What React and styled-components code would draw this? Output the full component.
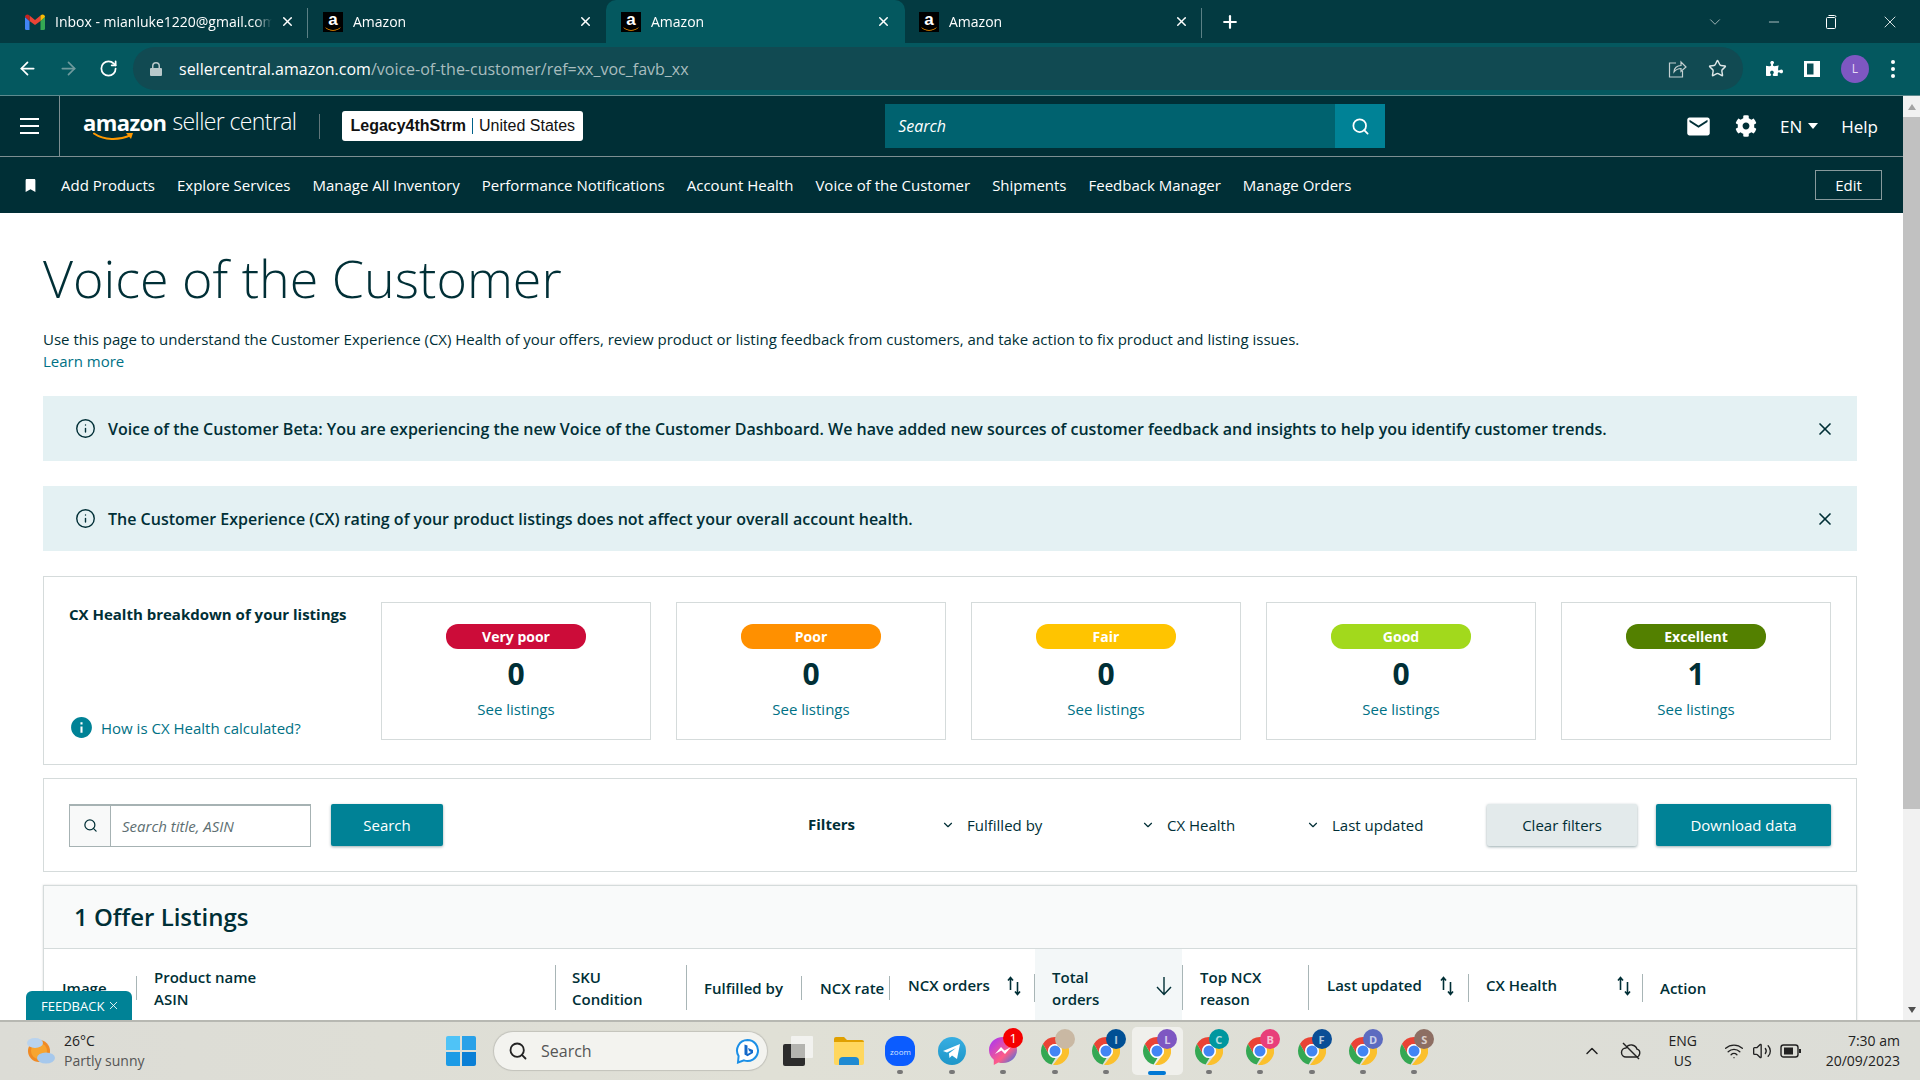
import styled, { createGlobalStyle } from "styled-components"
import { ArrowLeft, ArrowRight, RotateCw, Star, Search as SearchIcon, X, Plus, ChevronDown, Minus, Info, ChevronUp, Wifi, Volume2 } from "lucide-react"
import { FaPuzzlePiece, FaCog, FaBookmark } from "react-icons/fa"
import { MdEmail, MdInfo } from "react-icons/md"

const Global = createGlobalStyle`
    html, body { margin: 0; padding: 0; height: 100%; overflow: hidden; }
    * { box-sizing: border-box; }
    body { font-family: "Open Sans", "Noto Sans", sans-serif; color: #002f36; }
`

const UI = `"Open Sans", "Noto Sans", sans-serif`

function GmailIcon () {
return(<svg width="20" height="16" viewBox="0 0 20 16">
    <path d="M0 3v11.5A1.5 1.5 0 0 0 1.5 16H4.5V7z" fill="#4285f4"/>
    <path d="M20 3v11.5a1.5 1.5 0 0 1-1.5 1.5H15.5V7z" fill="#34a853"/>
    <path d="M4.5 7V1.5L10 6l5.5-4.500V7L10 11z" fill="#ea4335"/>
    <path d="M0 3C0 .8 2.400-.6 4.500 1.500V7L0 3z" fill="#c5221f"/>
    <path d="M20 3c0-2.200-2.400-3.600-4.500-1.500V7L20 3z" fill="#fbbc04"/>
</svg>)
}

function AmazonFavicon () {
return(<Favicon>
    <span>a</span>
    <svg width="20" height="6" viewBox="0 0 20 6"><path d="M2 1c5 4 11 4 16 0-3 5-13 5-16 0z" fill="#f90"/></svg>
</Favicon>)
}

function ChromeTab ({ title, active, gmail }) {
return(<Tab $active={active}>
    {gmail ? <GmailIcon/> : <AmazonFavicon/>}
    <TabTitle>{title}</TabTitle>
    <X size={15} strokeWidth={2.4} color="#fff"/>
</Tab>)
}

function SortArrows () {
return(<svg width="16" height="20" viewBox="0 0 16 20" fill="none" stroke="#002f36" strokeWidth="1.6">
    <path d="M4.500 14V2M2 4.500 4.500 1.500 7 4.500"/>
    <path d="M11.500 6v12M9 15.500l2.500 3 2.500-3"/>
</svg>)
}

function Smile () {
return(<svg width="42" height="10" viewBox="0 0 42 10" fill="none">
    <path d="M1 1.500c10 7 25 7 37 1.500" stroke="#f90" strokeWidth="2" strokeLinecap="round"/>
    <path d="M33 1h7l-2 6z" fill="#f90"/>
</svg>)
}

const chromes = [
    { badge: "", color: "#c9b8a3" },
    { badge: "I", color: "#004f94" },
    { badge: "L", color: "#7e57c2", active: true },
    { badge: "C", color: "#00979f" },
    { badge: "B", color: "#e83e7a" },
    { badge: "F", color: "#0a4e96" },
    { badge: "D", color: "#5c6bc0" },
    { badge: "S", color: "#8d6e63" },
]

function ChromeApp ({ badge, color, active }) {
return(<AppSlot $active={active}>
    <IconWrap>
        <svg width="28" height="28" viewBox="0 0 28 28">
            <path d="M14 0a14 14 0 0 1 12.100 7H14a7 7 0 0 0-6 10.500L1.900 7A14 14 0 0 1 14 0z" fill="#ea4335"/>
            <path d="M1.900 7 8 17.500a7 7 0 0 0 6.500 3.500L10.600 27.600A14 14 0 0 1 1.900 7z" fill="#34a853"/>
            <path d="M14 7h12.100A14 14 0 0 1 12 27.900l8-10.400A7 7 0 0 0 14 7z" fill="#fbc02d"/>
            <circle cx="14" cy="14" r="7" fill="#fff"/>
            <circle cx="14" cy="14" r="5.500" fill="#4285f4"/>
        </svg>
        <Badge $color={color}>{badge}</Badge>
    </IconWrap>
    <AppDot $active={active}/>
</AppSlot>)
}

const navLinks = ["Add Products", "Explore Services", "Manage All Inventory", "Performance Notifications", "Account Health", "Voice of the Customer", "Shipments", "Feedback Manager", "Manage Orders"]

const health = [
    { label: "Very poor", color: "#cc0c39", count: 0 },
    { label: "Poor", color: "#ff9000", count: 0 },
    { label: "Fair", color: "#ffc400", count: 0 },
    { label: "Good", color: "#a2d91c", count: 0 },
    { label: "Excellent", color: "#538000", count: 1 },
]

function App () {
return(<Screen>
    <Global/>
    <TabStrip>
        <ChromeTab gmail title="Inbox - mianluke1220@gmail.com"/>
        <TabSep/>
        <ChromeTab title="Amazon"/>
        <ChromeTab active title="Amazon"/>
        <ChromeTab title="Amazon"/>
        <TabSep/>
        <NewTab><Plus size={20} strokeWidth={2.6} color="#fff"/></NewTab>
        <WindowControls>
            <ChevronDown size={18} strokeWidth={1} color="#cfd8d8"/>
            <Minus size={16} strokeWidth={1} color="#fff"/>
            <svg width="14" height="16" viewBox="0 0 14 16" fill="none" stroke="#fff"><rect x="2.500" y="3.500" width="9" height="11" rx="1"/><path d="M4.500 1.500h6a1.500 1.500 0 0 1 1.500 1.500"/></svg>
            <X size={20} strokeWidth={1} color="#fff"/>
        </WindowControls>
    </TabStrip>
    <Toolbar>
        <ArrowLeft size={21} color="#fff" strokeWidth={2}/>
        <ArrowRight size={21} color="#6f9a9d" strokeWidth={2}/>
        <RotateCw size={19} color="#fff" strokeWidth={2.200}/>
        <Omnibox>
            <svg width="12" height="14" viewBox="0 0 12 14"><path d="M2 6V4a4 4 0 0 1 8 0v2h1a1 1 0 0 1 1 1v6a1 1 0 0 1-1 1H1a1 1 0 0 1-1-1V7a1 1 0 0 1 1-1zm1.500 0h5V4a2.500 2.500 0 0 0-5 0z" fill="#b9c8ca"/></svg>
            <UrlText><b>sellercentral.amazon.com</b>/voice-of-the-customer/ref=xx_voc_favb_xx</UrlText>
            <OmniIcons>
                <svg width="20" height="20" viewBox="0 0 20 20" fill="none" stroke="#c4d0d1" strokeWidth="1.200"><path d="M9 4H2.500v14h13v-6"/><path d="M7 13c0-4 3-6.500 7-6.500V3l5 5-5 4.500V9.500c-3 0-5 1-7 3.500z"/></svg>
                <Star size={19} color="#dfe7e8" strokeWidth={1.800}/>
            </OmniIcons>
        </Omnibox>
        <ToolIcons>
            <FaPuzzlePiece size={17} color="#fff"/>
            <svg width="18" height="18" viewBox="0 0 18 18"><path d="M1 1h16v16H1z" fill="#fff"/><path d="M4 3.500h6.500v11H4z" fill="#0a4f56"/></svg>
            <Avatar>L</Avatar>
            <Dots><i/><i/><i/></Dots>
        </ToolIcons>
    </Toolbar>
    <Main>
        <Page>
            <SellerHeader>
                <Burger><span/><span/><span/></Burger>
                <Logo>
                    <LogoWord>amazon<Smile/></LogoWord>
                    <LogoRest>seller central</LogoRest>
                </Logo>
                <HeaderSep/>
                <AccountBox><b>Legacy4thStrm</b><i/>United States</AccountBox>
                <SearchBar>
                    <SearchLabel>Search</SearchLabel>
                    <SearchGo><SearchIcon size={19} color="#fff" strokeWidth={2.200}/></SearchGo>
                </SearchBar>
                <HeaderRight>
                    <MdEmail size={27} color="#fff"/>
                    <FaCog size={22} color="#fff"/>
                    <Lang>EN<em/></Lang>
                    <span>Help</span>
                </HeaderRight>
            </SellerHeader>
            <NavBar>
                <BookmarkSlot><FaBookmark size={13} color="#fff"/></BookmarkSlot>
                {navLinks.map(l => <NavLink key={l}>{l}</NavLink>)}
                <EditButton>Edit</EditButton>
            </NavBar>
            <Content>
                <Title>Voice of the Customer</Title>
                <Intro>Use this page to understand the Customer Experience (CX) Health of your offers, review product or listing feedback from customers, and take action to fix product and listing issues.<br/><a>Learn more</a></Intro>
                <Alert>
                    <Info size={21} strokeWidth={1.600}/>
                    <p>Voice of the Customer Beta: You are experiencing the new Voice of the Customer Dashboard. We have added new sources of customer feedback and insights to help you identify customer trends.</p>
                    <X size={20} strokeWidth={2}/>
                </Alert>
                <Alert>
                    <Info size={21} strokeWidth={1.600}/>
                    <p>The Customer Experience (CX) rating of your product listings does not affect your overall account health.</p>
                    <X size={20} strokeWidth={2}/>
                </Alert>
                <HealthCard>
                    <HealthLeft>
                        <strong>CX Health breakdown of your listings</strong>
                        <HowLink><MdInfo size={25} color="#008296"/>How is CX Health calculated?</HowLink>
                    </HealthLeft>
                    {health.map(h => (
                        <HealthBox key={h.label}>
                            <Pill $color={h.color}>{h.label}</Pill>
                            <Count>{h.count}</Count>
                            <SeeLink>See listings</SeeLink>
                        </HealthBox>
                    ))}
                </HealthCard>
                <FilterCard>
                    <SearchField>
                        <SearchAddon><SearchIcon size={15} strokeWidth={2}/></SearchAddon>
                        <SearchInput>Search title, ASIN</SearchInput>
                    </SearchField>
                    <PrimaryButton $w={112}>Search</PrimaryButton>
                    <FiltersLabel>Filters</FiltersLabel>
                    <FilterSelect $w={200}><ChevronDown size={14}/>Fulfilled by</FilterSelect>
                    <FilterSelect $w={165}><ChevronDown size={14}/>CX Health</FilterSelect>
                    <FilterSelect $w={166}><ChevronDown size={14}/>Last updated</FilterSelect>
                    <ClearButton>Clear filters</ClearButton>
                    <PrimaryButton $w={175} $tall>Download data</PrimaryButton>
                </FilterCard>
                <ListingsCard>
                    <ListingsTitle>1 Offer Listings</ListingsTitle>
                    <HeadRow>
                        <HeadCell $w={92} $pad={18}>Image</HeadCell>
                        <HeadSep $h={24}/>
                        <HeadCell $w={418} $pad={17}>Product name<br/>ASIN</HeadCell>
                        <HeadSep $h={45}/>
                        <HeadCell $w={130} $pad={16}>SKU<br/>Condition</HeadCell>
                        <HeadSep $h={45}/>
                        <HeadCell $w={114} $pad={17}>Fulfilled by</HeadCell>
                        <HeadSep $h={24}/>
                        <HeadCell $w={87} $pad={18}>NCX rate</HeadCell>
                        <HeadSep $h={24}/>
                        <HeadCell $w={144} $pad={18} $up>NCX orders<SortSlot $right={12}><SortArrows/></SortSlot></HeadCell>
                        <HeadSep $h={28}/>
                        <HeadCell $w={147} $pad={17} $sorted>Total<br/>orders<SortSlot $right={9}><ArrowDownIcon/></SortSlot></HeadCell>
                        <HeadSep $h={45}/>
                        <HeadCell $w={125} $pad={17}>Top NCX<br/>reason</HeadCell>
                        <HeadSep $h={45}/>
                        <HeadCell $w={159} $pad={18} $up>Last updated<SortSlot $right={13}><SortArrows/></SortSlot></HeadCell>
                        <HeadSep $h={28}/>
                        <HeadCell $w={173} $pad={17} $up>CX Health<SortSlot $right={10}><SortArrows/></SortSlot></HeadCell>
                        <HeadSep $h={28}/>
                        <HeadCell $w={150} $pad={17}>Action</HeadCell>
                    </HeadRow>
                </ListingsCard>
            </Content>
            <Feedback>FEEDBACK<X size={13} strokeWidth={1.600}/></Feedback>
        </Page>
        <Scrollbar>
            <ScrollArrow><ArrowGlyph/></ScrollArrow>
            <ScrollThumb/>
            <ScrollArrow $down><ArrowGlyph $down/></ScrollArrow>
        </Scrollbar>
    </Main>
    <Taskbar>
        <Weather>
            <svg width="32" height="32" viewBox="0 0 32 32">
                <circle cx="14" cy="16" r="11" fill="#f08a24"/>
                <circle cx="14" cy="16" r="8" fill="#f7a531"/>
                <ellipse cx="10" cy="8" rx="8" ry="5" fill="#b9d3ee"/>
                <ellipse cx="21" cy="23" rx="9" ry="5.500" fill="#a6c8ec"/>
            </svg>
            <WeatherText><span>26°C</span><small>Partly sunny</small></WeatherText>
        </Weather>
        <StartIcon>
            <svg width="30" height="30" viewBox="0 0 30 30">
                <path d="M0 2a2 2 0 0 1 2-2h12v14H0z" fill="#4fc3f7"/>
                <path d="M16 0h12a2 2 0 0 1 2 2v12H16z" fill="#2aa1e8"/>
                <path d="M0 16h14v14H2a2 2 0 0 1-2-2z" fill="#1c9be6"/>
                <path d="M16 16h14v12a2 2 0 0 1-2 2H16z" fill="#0a7fd6"/>
            </svg>
        </StartIcon>
        <TaskSearch>
            <SearchIcon size={20} color="#222" strokeWidth={2.200}/>
            <span>Search</span>
            <BingMark>
                <svg width="25" height="26" viewBox="0 0 25 26" fill="none">
                    <path d="M12.500 2a10.500 10.500 0 1 1-3.500 20.400L3 24.500l.6-6.500A10.500 10.500 0 0 1 12.500 2z" fill="#fff" stroke="#1b8fe6" strokeWidth="2"/>
                    <path d="M9.500 6.500l3 1v8.500l3.500-2-2-1-1-3 5 2v3l-5.500 3.200-3-1.800z" fill="#1368c9"/>
                </svg>
            </BingMark>
        </TaskSearch>
        <AppSlot>
            <svg width="30" height="30" viewBox="0 0 30 30">
                <rect x="0" y="8" width="22" height="22" rx="2" fill="#2c2c2c"/>
                <rect x="8" y="0" width="22" height="22" rx="1" fill="#f2f2ef"/>
                <rect x="8" y="8" width="14" height="14" fill="#b4b4b0"/>
            </svg>
        </AppSlot>
        <AppSlot>
            <svg width="30" height="28" viewBox="0 0 30 28">
                <path d="M0 2a2 2 0 0 1 2-2h8l3 3h15a2 2 0 0 1 2 2v3H0z" fill="#e0a000"/>
                <path d="M0 5h30v21a2 2 0 0 1-2 2H2a2 2 0 0 1-2-2z" fill="#ffd75e"/>
                <path d="M5 24a4 4 0 0 1 4-4h12a4 4 0 0 1 4 4v4H5z" fill="#1f8ad2"/>
            </svg>
        </AppSlot>
        <AppSlot>
            <ZoomIcon>zoom</ZoomIcon>
            <AppDot/>
        </AppSlot>
        <AppSlot>
            <svg width="28" height="28" viewBox="0 0 28 28">
                <defs><linearGradient id="tg" x1="0" y1="0" x2="0" y2="1"><stop offset="0" stopColor="#37aee2"/><stop offset="1" stopColor="#1e96c8"/></linearGradient></defs>
                <circle cx="14" cy="14" r="14" fill="url(#tg)"/>
                <path d="M5 14 22 7l-3 15-5-3.500-2.500 2.500-.6-4.500L18 11 9 15.500z" fill="#fff"/>
            </svg>
            <AppDot/>
        </AppSlot>
        <AppSlot>
            <IconWrap>
                <svg width="28" height="30" viewBox="0 0 28 30">
                    <defs><linearGradient id="ms" x1="0" y1="0" x2="1" y2="1"><stop offset="0" stopColor="#a033ff"/><stop offset="0.6" stopColor="#ff5c87"/><stop offset="1" stopColor="#0a7cff"/></linearGradient></defs>
                    <path d="M14 1C6 1 0 6.800 0 14c0 4 1.800 7.400 4.800 9.800V29l4.600-2.500c1.500.4 3 .6 4.600.6 8 0 14-5.900 14-13.100S22 1 14 1z" fill="url(#ms)"/>
                    <path d="M6 18l6-7 3.500 3.500L22 11l-6 7-3.500-3.500z" fill="#fff"/>
                </svg>
                <RedBadge>1</RedBadge>
            </IconWrap>
            <AppDot/>
        </AppSlot>
        {chromes.map(c => <ChromeApp key={c.badge + c.color} {...c}/>)}
        <Tray>
            <ChevronUp size={20} strokeWidth={1.800} color="#222"/>
            <svg width="22" height="22" viewBox="0 0 22 22" fill="none" stroke="#222" strokeWidth="1.400"><path d="M6 17h10a4 4 0 0 0 1-7.800A6 6 0 0 0 6 8a4.500 4.500 0 0 0 0 9z"/><path d="M3 3l16 16"/></svg>
            <TrayLang>ENG<br/>US</TrayLang>
            <TrayIcons>
                <Wifi size={20} strokeWidth={1.600} color="#222"/>
                <Volume2 size={20} strokeWidth={1.600} color="#222"/>
                <svg width="22" height="16" viewBox="0 0 22 16" fill="none"><rect x="1" y="2" width="17" height="12" rx="2.500" stroke="#222" strokeWidth="1.400"/><rect x="4" y="4.500" width="9" height="7" fill="#222"/><rect x="19" y="6" width="2" height="4" fill="#222"/></svg>
            </TrayIcons>
            <Clock>7:30 am<br/>20/09/2023</Clock>
        </Tray>
    </Taskbar>
</Screen>)
}

function ArrowDownIcon () {
return(<svg width="18" height="20" viewBox="0 0 18 20" fill="none" stroke="#002f36" strokeWidth="1.400"><path d="M9 1v17M2 11l7 7.500 7-7.500"/></svg>)
}

const Screen = styled.div`
    position: relative;
    display: flex;
    flex-direction: column;
    width: 1920px;
    height: 1080px;
    overflow: hidden;
    background: #fff;
`
const TabStrip = styled.div`
    display: flex;
    align-items: stretch;
    height: 43px;
    padding-left: 10px;
    background: #033a41;
    color: #fff;
    flex: none;
`
const Tab = styled.div`
    display: flex;
    align-items: center;
    width: 299px;
    height: 43px;
    padding: 0 14px 0 15px;
    margin-right: -1px;
    border-radius: 10px 10px 0 0;
    background: ${p => p.$active ? "#04585f" : "transparent"};
    font-size: 14px;
    flex: none;
    svg { flex: none; }
`
const TabTitle = styled.span`
    flex: 1;
    margin: 0 8px 0 10px;
    overflow: hidden;
    white-space: nowrap;
    font-family: "Open Sans", sans-serif;
    font-size: 14px;
    mask-image: linear-gradient(to right, #000 92%, transparent);
`
const Favicon = styled.div`
    position: relative;
    display: flex;
    flex-direction: column;
    align-items: center;
    width: 20px;
    height: 20px;
    background: #000;
    flex: none;
    span {
        color: #fff;
        font: bold 17px/16px "Liberation Sans", sans-serif;
    }
    svg { margin-top: -2px; }
`
const TabSep = styled.div`
    width: 1px;
    height: 30px;
    margin: 8px 0 0 -1px;
    background: #5b8085;
    flex: none;
`
const NewTab = styled.div`
    display: flex;
    align-items: center;
    margin-left: 18px;
`
const WindowControls = styled.div`
    display: flex;
    align-items: center;
    gap: 42px;
    margin-left: auto;
    padding-right: 20px;
`
const Toolbar = styled.div`
    display: flex;
    align-items: center;
    gap: 20px;
    height: 53px;
    padding: 0 0 1px 17px;
    background: #04585f;
    border-bottom: 1px solid #5d8a8e;
    flex: none;
`
const Omnibox = styled.div`
    display: flex;
    align-items: center;
    width: 1610px;
    height: 43px;
    margin-left: -5px;
    padding: 0 16px 0 17px;
    border-radius: 22px;
    background: #114a52;
`
const UrlText = styled.div`
    margin-left: 17px;
    font-size: 16px;
    color: #a9bdbf;
    b { font-weight: 400; color: #fff; }
`
const OmniIcons = styled.div`
    display: flex;
    align-items: center;
    gap: 21px;
    margin-left: auto;
`
const ToolIcons = styled.div`
    display: flex;
    align-items: center;
    gap: 20px;
    margin-left: 3px;
`
const Avatar = styled.div`
    display: flex;
    align-items: center;
    justify-content: center;
    width: 28px;
    height: 28px;
    border-radius: 50%;
    background: #7e57c2;
    color: #e5dcf5;
    font-size: 12px;
`
const Dots = styled.div`
    display: flex;
    flex-direction: column;
    gap: 3px;
    margin-left: 2px;
    i {
        width: 4px;
        height: 4px;
        border-radius: 50%;
        background: #fff;
    }
`
const Main = styled.div`
    display: flex;
    flex: 1;
    min-height: 0;
`
const Page = styled.div`
    position: relative;
    display: flex;
    flex-direction: column;
    flex: 1;
    min-width: 0;
    overflow: hidden;
`
const SellerHeader = styled.div`
    display: flex;
    align-items: center;
    height: 61px;
    background: #002f36;
    border-bottom: 1px solid #7d8f92;
    color: #fff;
    flex: none;
`
const Burger = styled.div`
    display: flex;
    flex-direction: column;
    justify-content: center;
    gap: 5px;
    width: 60px;
    height: 60px;
    padding: 0 20px;
    border-right: 1px solid #7d8f92;
    span {
        height: 2px;
        background: #fff;
    }
`
const Logo = styled.div`
    display: flex;
    align-items: flex-start;
    height: 38px;
    margin-left: 23px;
`
const LogoWord = styled.div`
    position: relative;
    font: 700 22px/30px "Open Sans", sans-serif;
    letter-spacing: -0.6px;
    svg {
        position: absolute;
        left: 10px;
        top: 25px;
    }
`
const LogoRest = styled.div`
    margin-left: 6px;
    font: 300 23px/29px "Open Sans", sans-serif;
    letter-spacing: -0.6px;
`
const HeaderSep = styled.div`
    width: 1px;
    height: 25px;
    margin-left: 23px;
    background: #60767a;
`
const AccountBox = styled.div`
    display: flex;
    align-items: center;
    height: 30px;
    margin-left: 22px;
    padding: 0 8px;
    border-radius: 3px;
    background: #fff;
    color: #111;
    font: 16px "Liberation Sans", sans-serif;
    white-space: nowrap;
    i {
        width: 1px;
        height: 16px;
        margin: 0 6px;
        background: #00628a;
    }
`
const SearchBar = styled.div`
    display: flex;
    align-items: center;
    justify-content: space-between;
    width: 500px;
    height: 44px;
    margin-left: 302px;
    background: #00626f;
`
const SearchLabel = styled.span`
    margin-left: 13px;
    font-size: 16px;
    font-style: italic;
`
const SearchGo = styled.div`
    display: flex;
    align-items: center;
    justify-content: center;
    width: 50px;
    height: 44px;
    background: #008296;
`
const HeaderRight = styled.div`
    display: flex;
    align-items: center;
    gap: 23px;
    margin-left: auto;
    padding-right: 25px;
    font-size: 17px;
`
const Lang = styled.span`
    display: flex;
    align-items: center;
    gap: 6px;
    em {
        border: 5px solid transparent;
        border-top: 6px solid #fff;
        border-bottom: 0;
    }
`
const NavBar = styled.div`
    display: flex;
    align-items: center;
    gap: 22px;
    height: 56px;
    background: #002f36;
    color: #fff;
    flex: none;
`
const BookmarkSlot = styled.div`
    display: flex;
    justify-content: center;
    width: 61px;
    margin-right: -22px;
`
const NavLink = styled.span`
    font-size: 15px;
    font-weight: 500;
    white-space: nowrap;
`
const EditButton = styled.div`
    display: flex;
    align-items: center;
    justify-content: center;
    width: 67px;
    height: 30px;
    margin-left: auto;
    margin-right: 21px;
    border: 1px solid #87999c;
    font-size: 15px;
    font-weight: 500;
`
const Content = styled.div`
    display: flex;
    flex-direction: column;
    padding: 0 46px 0 43px;
`
const Title = styled.h1`
    margin: 29px 0 0;
    font-size: 52px;
    line-height: 72px;
    font-weight: 300;
    white-space: nowrap;
`
const Intro = styled.div`
    margin-top: 14px;
    font-size: 15px;
    line-height: 22px;
    white-space: nowrap;
    a { color: #007185; }
`
const Alert = styled.div`
    display: flex;
    align-items: center;
    height: 65px;
    margin-top: 24px;
    padding: 0 22px 0 32px;
    background: #e4f1f3;
    p {
        flex: 1;
        margin: 0 0 0 12px;
        font-size: 16px;
        font-weight: 600;
        white-space: nowrap;
    }
    & + & { margin-top: 25px; }
`
const HealthCard = styled.div`
    display: flex;
    gap: 25px;
    height: 189px;
    margin-top: 25px;
    padding: 25px 25px 24px;
    border: 1.500px solid #d5dbdb;
`
const HealthLeft = styled.div`
    display: flex;
    flex-direction: column;
    justify-content: space-between;
    width: 290px;
    strong {
        font-size: 15px;
        font-weight: 700;
        line-height: 24px;
    }
`
const HowLink = styled.a`
    display: flex;
    align-items: center;
    gap: 7px;
    margin-bottom: 0;
    color: #007185;
    font-size: 15px;
`
const HealthBox = styled.div`
    display: flex;
    flex-direction: column;
    align-items: center;
    width: 270px;
    padding-top: 21px;
    border: 1.500px solid #d5dbdb;
    flex: none;
`
const Pill = styled.div`
    display: flex;
    align-items: center;
    justify-content: center;
    width: 140px;
    height: 25px;
    border-radius: 12px;
    background: ${p => p.$color};
    color: #fff;
    font-size: 14px;
    font-weight: 700;
`
const Count = styled.div`
    margin-top: 4px;
    font-size: 30px;
    line-height: 42px;
    font-weight: 700;
`
const SeeLink = styled.a`
    margin-top: 4px;
    color: #007185;
    font-size: 15px;
`
const FilterCard = styled.div`
    position: relative;
    display: flex;
    align-items: center;
    height: 94px;
    margin-top: 13px;
    padding: 0 25px;
    border: 1.500px solid #d5dbdb;
`
const SearchField = styled.div`
    display: flex;
    width: 242px;
    height: 43px;
    border: 1.500px solid #a6b2b3;
    border-top-width: 2px;
    flex: none;
`
const SearchAddon = styled.div`
    display: flex;
    align-items: center;
    justify-content: center;
    width: 41px;
    background: #f8f9f9;
    border-right: 1px solid #a6b2b3;
`
const SearchInput = styled.div`
    display: flex;
    align-items: center;
    padding-left: 11px;
    color: #5d6f72;
    font-size: 15px;
    font-style: italic;
`
const PrimaryButton = styled.div`
    display: flex;
    align-items: center;
    justify-content: center;
    width: ${p => p.$w}px;
    height: 42px;
    margin-left: ${p => p.$tall ? 19 : 20}px;
    border-radius: 2px;
    background: #008296;
    box-shadow: 0 1px 3px rgba(0, 47, 54, 0.4);
    color: #fff;
    font-size: 15px;
    font-weight: 500;
    flex: none;
`
const FiltersLabel = styled.div`
    margin: -3px 0 0 365px;
    font-size: 15px;
    font-weight: 700;
    width: 133px;
    flex: none;
`
const FilterSelect = styled.div`
    display: flex;
    align-items: center;
    gap: 12px;
    width: ${p => p.$w}px;
    font-size: 15px;
    flex: none;
    &:nth-of-type(n) svg { flex: none; }
`
const ClearButton = styled.div`
    display: flex;
    align-items: center;
    justify-content: center;
    width: 150px;
    height: 42px;
    margin-left: auto;
    border-radius: 2px;
    background: #e3eaeb;
    box-shadow: 0 1px 3px rgba(0, 47, 54, 0.4);
    font-size: 15px;
    flex: none;
`
const ListingsCard = styled.div`
    margin-top: 13px;
    border: 1.500px solid #d5dbdb;
    box-shadow: 0 0 2px rgba(0, 0, 0, 0.15);
`
const ListingsTitle = styled.div`
    height: 63px;
    padding-left: 30px;
    background: #f9fafa;
    border-bottom: 1.500px solid #d5dbdb;
    font-size: 24px;
    font-weight: 600;
    line-height: 62px;
`
const HeadRow = styled.div`
    display: flex;
    align-items: center;
    height: 77px;
`
const HeadCell = styled.div`
    position: relative;
    display: flex;
    flex-direction: column;
    justify-content: center;
    align-self: stretch;
    width: ${p => p.$w}px;
    padding-left: ${p => p.$pad}px;
    padding-bottom: ${p => p.$up ? 5 : 0}px;
    background: ${p => p.$sorted ? "#f3f7f8" : "transparent"};
    font-size: 15px;
    font-weight: 600;
    line-height: 22px;
    white-space: nowrap;
    flex: none;
    br { display: block; }
`
const HeadSep = styled.div`
    width: 1px;
    height: ${p => p.$h}px;
    background: #a8b5b6;
    flex: none;
`
const SortSlot = styled.div`
    position: absolute;
    right: ${p => p.$right}px;
    top: 50%;
    transform: translateY(-12px);
    display: flex;
`
const Feedback = styled.div`
    position: absolute;
    left: 26px;
    bottom: 0;
    display: flex;
    align-items: center;
    gap: 3px;
    padding: 0 5px 0 15px;
    width: 106px;
    height: 29px;
    border-radius: 6px 6px 0 0;
    background: #008296;
    color: #fff;
    font-size: 13px;
    font-weight: 500;
`
const Scrollbar = styled.div`
    display: flex;
    flex-direction: column;
    width: 17px;
    background: #f1f1f1;
    flex: none;
`
const ScrollArrow = styled.div`
    display: flex;
    align-items: center;
    justify-content: center;
    height: 21px;
    margin-top: ${p => p.$down ? "auto" : 0};
`
const ArrowGlyph = styled.i`
    border: 4px solid transparent;
    border-${p => p.$down ? "top" : "bottom"}: 6px solid ${p => p.$down ? "#505050" : "#a3a3a3"};
    border-${p => p.$down ? "bottom" : "top"}: 0;
`
const ScrollThumb = styled.div`
    height: 692px;
    background: #c1c1c1;
`
const Taskbar = styled.div`
    display: flex;
    align-items: center;
    height: 60px;
    background: linear-gradient(to right, #dcdcd6, #e0e0d6 40%, #dcddd7);
    border-top: 2px solid #b7b8b2;
    flex: none;
`
const Weather = styled.div`
    display: flex;
    align-items: center;
    gap: 7px;
    width: 446px;
    padding-left: 25px;
    flex: none;
`
const WeatherText = styled.div`
    display: flex;
    flex-direction: column;
    font-size: 14px;
    line-height: 20px;
    color: #222;
    small {
        font-size: 14px;
        color: #555;
    }
`
const StartIcon = styled.div`
    display: flex;
    width: 48px;
    flex: none;
`
const TaskSearch = styled.div`
    position: relative;
    display: flex;
    align-items: center;
    gap: 13px;
    width: 273px;
    height: 38px;
    padding-left: 14px;
    border-radius: 19px;
    background: #f3f3ef;
    box-shadow: 0 0 1px 1px #c2c2bb;
    margin-right: 5px;
    color: #555;
    font-size: 16px;
    flex: none;
`
const BingMark = styled.div`
    position: absolute;
    right: 7px;
    top: 6px;
    display: flex;
`
const AppSlot = styled.div`
    position: relative;
    display: flex;
    align-items: center;
    justify-content: center;
    width: 51.400px;
    height: 48px;
    border-radius: 5px;
    background: ${p => p.$active ? "#f0f0ec" : "transparent"};
    flex: none;
`
const IconWrap = styled.div`
    position: relative;
    display: flex;
`
const Badge = styled.div`
    position: absolute;
    right: -6px;
    top: -8px;
    display: flex;
    align-items: center;
    justify-content: center;
    width: 20px;
    height: 20px;
    border-radius: 50%;
    background: ${p => p.$color};
    color: rgba(255, 255, 255, 0.7);
    font-size: 11px;
    font-weight: 700;
`
const RedBadge = styled(Badge)`
    background: #f50000;
    color: #fff;
    font-weight: 400;
    font-size: 13px;
`
const AppDot = styled.div`
    position: absolute;
    left: 50%;
    bottom: ${p => p.$active ? 0 : 1}px;
    width: ${p => p.$active ? 18 : 6}px;
    height: ${p => p.$active ? 4 : 4}px;
    margin-left: ${p => p.$active ? -9 : -3}px;
    border-radius: 2px;
    background: ${p => p.$active ? "#0078d4" : "#777"};
`
const ZoomIcon = styled.div`
    display: flex;
    align-items: center;
    justify-content: center;
    width: 30px;
    height: 30px;
    border-radius: 12px;
    background: #0b5cff;
    color: #d6e4ff;
    font-size: 8px;
`
const Tray = styled.div`
    display: flex;
    align-items: center;
    margin-left: auto;
    padding-right: 20px;
    gap: 18px;
    color: #222;
`
const TrayLang = styled.div`
    width: 46px;
    text-align: center;
    font-size: 14px;
    line-height: 20px;
`
const TrayIcons = styled.div`
    display: flex;
    align-items: center;
    gap: 8px;
`
const Clock = styled.div`
    margin-left: 6px;
    text-align: right;
    font-size: 14px;
    line-height: 20px;
`

export default App
